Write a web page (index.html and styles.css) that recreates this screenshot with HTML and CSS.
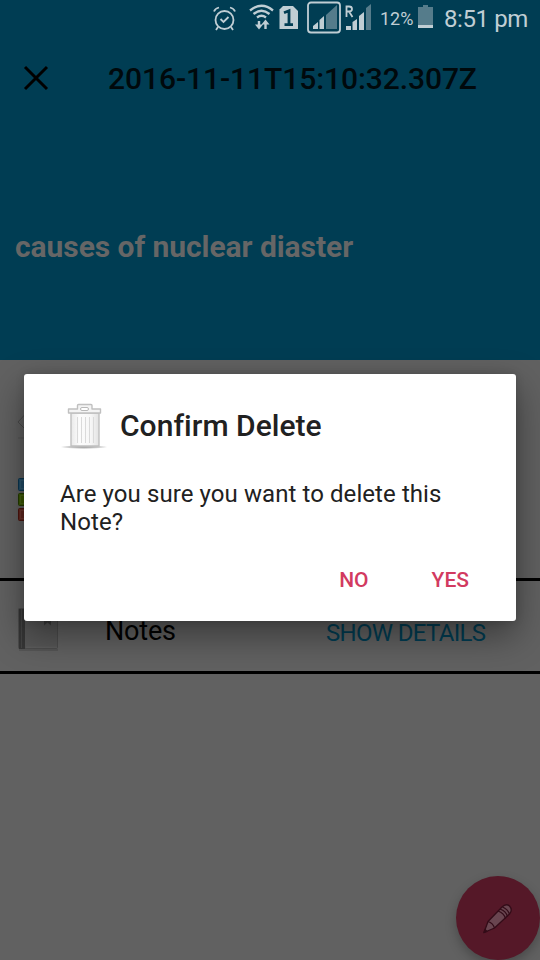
FILE: index.html
```html
<!DOCTYPE html>
<html lang="en">
<head>
<meta charset="utf-8">
<title>Confirm Delete</title>
<link rel="stylesheet" href="styles.css">
</head>
<body>
<div class="screen">
  <header class="hero">
    <div class="status">
      <svg class="icons" width="172" height="36" viewBox="0 0 172 36" fill="none" stroke="#c0ced4" stroke-width="1.8">
        <circle cx="24.500" cy="20" r="9"/>
        <path d="M20.500 19l3 3 5-5M14 11.500q1-3 5-4M35 11.500q-1-3-5-4M18 27l-2 3M31 27l2 3"/>
        <path d="M50 10.500q11.500-9.500 23 0M53.500 14q8-6.500 16 0M57 17.500q4.500-3.500 9 0" stroke-width="2.300"/>
        <path d="M59 21v5M65.500 24v5" stroke-width="2.400"/>
        <path d="M55 24.500h8L59 29.500zM61.500 24.500h8l-4-5z" fill="#c0ced4" stroke="none"/>
        <path d="M83 6h10l5 5v18H79.500V9.500z" fill="#c0ced4" stroke="none"/>
        <path d="M84 12.800l5-2V25M84.500 24.700h8.500" stroke="#003d53" stroke-width="2.800"/>
        <rect x="108" y="2.500" width="32" height="30" rx="3"/>
        <path d="M126 15l11-10v24h-11z" fill="#557c8b" stroke="none"/>
        <path d="M113 29v-3l5-4v7zM119.500 29v-9l4.500-4v13z" fill="#c0ced4" stroke="none"/>
        <path d="M146.500 17V6.500h2.500q3 0 3 2.500t-3 2.500h-2.500M149 11.500l3.500 5.500"/>
        <path d="M166 8l5-4v26h-5z" fill="#557c8b" stroke="none"/>
        <path d="M146 30v-4h5v4zM152.500 30v-8l4.500-3v11zM159 30V16l5-4v18z" fill="#c0ced4" stroke="none"/>
      </svg>
      <span class="percent">12%</span>
      <svg class="battery" width="15" height="24" viewBox="0 0 15 24"><path d="M5 0h5v2h5v20H0V2h5z" fill="#557c8b"/><path d="M0 20h15v3H0z" fill="#c0ced4"/></svg>
      <span class="clock">8:51 pm</span>
    </div>
    <div class="toolbar">
      <svg width="26" height="26" viewBox="0 0 26 26" stroke="#000" stroke-width="3"><path d="M2 2l22 22M24 2L2 24"/></svg>
      <span class="stamp">2016-11-11T15:10:32.307Z</span>
    </div>
    <h1 class="subject">causes of nuclear diaster</h1>
  </header>
  <main class="content">
    <section class="summary">
      <svg width="48" height="218" viewBox="0 0 48 218" fill="none">
        <path d="M30 49L18 62l12 12" stroke="#4b4b4b"/>
        <path d="M18 78h20" stroke="#555"/>
        <rect x="18.500" y="118.500" width="26" height="12" rx="1" fill="#224e69" stroke="#0b3650"/><rect x="20.500" y="120.500" width="22" height="8" stroke="#2e5870"/>
        <rect x="18.500" y="133.500" width="26" height="12" rx="1" fill="#3c5803" stroke="#243b00"/><rect x="20.500" y="135.500" width="22" height="8" stroke="#486414"/>
        <rect x="18.500" y="148.500" width="26" height="12" rx="1" fill="#632820" stroke="#4d150f"/><rect x="20.500" y="150.500" width="22" height="8" stroke="#70362e"/>
      </svg>
    </section>
    <section class="notes">
      <svg class="book" width="42" height="46" viewBox="0 0 42 46">
        <path d="M1 42h39v2H1z" fill="#555"/>
        <rect x=".5" y="1.500" width="39" height="40" rx="1" fill="#575757" stroke="#4c4c4c"/>
        <path d="M8 39.500h31v1.500H8z" fill="#5d5d5d"/><path d="M1 2h6v40H1z" fill="#363636"/><path d="M3.500 2v39" stroke="#444"/>
        <path d="M26 2h7v16.500l-3.500-3-3.500 3z" fill="#3c3c3c"/>
      </svg>
      <span class="label">Notes</span>
      <span class="details">SHOW DETAILS</span>
    </section>
  </main>
  <div class="fab">
    <svg width="32" height="32" viewBox="0 0 32 32" stroke="#330c18" stroke-width="1.300" stroke-linejoin="round">
      <path d="M2 30.500l4-11L20 5q4-4 7.500-1 3.500 4 0 8L12.500 26z" fill="#694550"/>
      <path d="M6 19.500q5 1.500 6.500 6.500M16 9q6 2 7.500 7.500M18 7q6 2 7.500 7.500M20.500 5q5 2 7 7" fill="none"/>
      <path d="M2 30.500l1-3 2 2z" fill="#330c18"/>
    </svg>
  </div>
  <div class="dialog">
    <div class="heading">
      <svg width="48" height="48" viewBox="0 0 48 48">
        <defs>
          <radialGradient id="ground"><stop offset="0" stop-color="#999"/><stop offset=".65" stop-color="#ccc"/><stop offset="1" stop-color="#fff"/></radialGradient>
          <linearGradient id="metal"><stop offset="0" stop-color="#e9e9e9"/><stop offset=".3" stop-color="#fcfcfc"/><stop offset=".7" stop-color="#f7f7f7"/><stop offset="1" stop-color="#e2e2e2"/></linearGradient>
        </defs>
        <ellipse cx="24" cy="45" rx="24" ry="2" fill="url(#ground)"/>
        <path d="M11 11h28v33H11z" fill="url(#metal)" stroke="#c0c0c0" stroke-width="1.400"/>
        <path d="M17.500 15v26M21.500 15v26M25.500 15v26M29.500 15v26M33.500 15v26" stroke="#dadada"/>
        <path d="M8.500 7h9V3.500q0-1 1-1h12.500q1 0 1 1V7h8.500v4H8.500z" fill="#f4f4f4" stroke="#c0c0c0" stroke-width="1.400" stroke-linejoin="round"/>
        <rect x="20.500" y="5.500" width="8" height="3" rx="1.500" fill="#fff" stroke="#b9b9b9"/>
      </svg>
      <h2 class="title">Confirm Delete</h2>
    </div>
    <p class="message">Are you sure you want to delete this Note?</p>
    <div class="actions"><span>NO</span><span>YES</span></div>
  </div>
</div>
</body>
</html>
```
FILE: styles.css
```css
* { box-sizing: border-box; }
body { margin: 0; font-family: Roboto, sans-serif; }
svg { display: block; flex: none; }
h1, h2, p { margin: 0; }
.screen { position: relative; width: 540px; height: 960px; overflow: hidden; background: #616161; }
.hero { height: 360px; background: #003d53; }
.status { display: flex; height: 36px; padding-left: 200px; color: #c0ced4; white-space: nowrap; }
.percent { width: 38px; margin-left: 8px; padding-top: 8px; font-size: 18px; line-height: 22px; }
.battery { margin-top: 5px; }
.clock { margin-left: 11px; padding-top: 4px; font-size: 24px; letter-spacing: -.4px; line-height: 30px; }
.toolbar { display: flex; align-items: center; height: 84px; padding-left: 23px; gap: 59px; }
.stamp { padding-top: 2px; font-size: 30px; font-weight: 500; letter-spacing: -.08px; color: #00090c; line-height: 36px; }
.subject { padding: 109px 0 0 15px; font-size: 30px; line-height: 36px; font-weight: 700; letter-spacing: -.06px; color: #666; }
.summary { height: 218px; }
.notes { display: flex; height: 96px; padding-left: 18px; border: solid #000; border-width: 3px 0; }
.book { margin-top: 26px; }
.label { width: 221px; margin-left: 45px; padding-top: 34px; font-size: 27px; letter-spacing: -.2px; line-height: 32px; color: #000; }
.details { padding-top: 38px; font-size: 24px; letter-spacing: -.68px; line-height: 28px; color: #003d53; white-space: nowrap; }
.fab { position: absolute; left: 456px; top: 876px; width: 84px; height: 84px; padding: 26px 0 0 26px; border-radius: 50%; background: #551828; box-shadow: 0 5px 11px rgba(0,0,0,.25); }
.dialog { position: absolute; left: 24px; top: 374px; width: 492px; height: 247px; padding: 28px 36px 0; border-radius: 3px; background: #fff; box-shadow: 0 14px 36px rgba(0,0,0,.42), 0 0 9px rgba(0,0,0,.15); }
.heading { display: flex; align-items: center; gap: 12px; height: 48px; }
.title { font-size: 30px; line-height: 36px; font-weight: 500; letter-spacing: .04px; color: #212121; }
.message { margin-top: 30px; font-size: 24px; letter-spacing: .08px; line-height: 28px; color: #212121; }
.actions { display: flex; justify-content: flex-end; gap: 63px; margin-top: 32px; padding-right: 11px; font-size: 21px; line-height: 25px; font-weight: 500; color: #d23a60; }
```
